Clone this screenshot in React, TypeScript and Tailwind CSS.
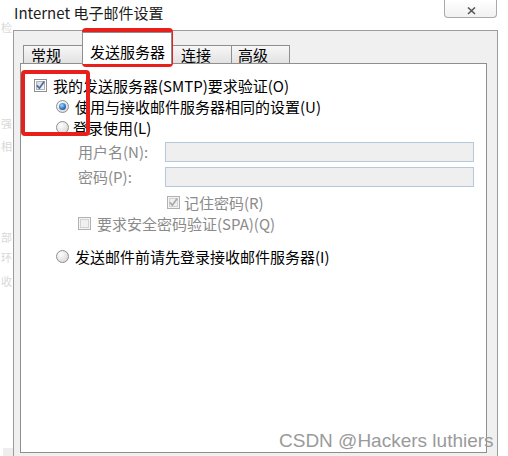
import type { ReactNode } from "react"

const REMNANTS = [
  { ch: "检", gap: "mt-[22px]" },
  { ch: "强", gap: "mt-[85px]" },
  { ch: "相", gap: "mt-[12px]" },
  { ch: "部", gap: "mt-[80px]" },
  { ch: "环", gap: "mt-[9px]" },
  { ch: "收", gap: "mt-[13px]" },
]

function CheckBox({ checked, disabled }: { checked?: boolean; disabled?: boolean }) {
  return (
    <span
      className={
        disabled
          ? "flex h-[13px] w-[13px] shrink-0 items-center justify-center border border-[#b1b1b1] bg-[#f4f4f4]"
          : "flex h-[13px] w-[13px] shrink-0 items-center justify-center border border-[#8e8f8f] bg-white"
      }
    >
      <span
        className={
          disabled
            ? "flex h-[9px] w-[9px] items-center justify-center border border-[#d2d2d2] bg-[#f0f0f0]"
            : "flex h-[9px] w-[9px] items-center justify-center border border-[#aeb3b9] bg-gradient-to-br from-[#d3d6da] to-[#f8f8f8]"
        }
      >
        {checked && (
          <svg width="9" height="9" viewBox="0 0 9 9" className="overflow-visible">
            <path
              d="M0.8 4.4 L3.4 7.2 L8.2 0.6"
              fill="none"
              stroke={disabled ? "#a9a9a9" : "#4d6aa3"}
              strokeWidth="1.7"
            />
          </svg>
        )}
      </span>
    </span>
  )
}

function Radio({ selected }: { selected?: boolean }) {
  return (
    <span className="flex h-[13px] w-[13px] shrink-0 items-center justify-center rounded-full border border-[#8e8f8f] bg-[radial-gradient(circle_at_35%_30%,#ffffff,#d0d0d0)]">
      {selected && (
        <span className="h-[7px] w-[7px] rounded-full bg-[radial-gradient(circle_at_40%_35%,#a8dcff,#2c74bf_55%,#17457c)]" />
      )}
    </span>
  )
}

function Row({ children, className }: { children: ReactNode; className: string }) {
  return (
    <div className={"flex h-[21px] items-center whitespace-nowrap text-[15px] leading-[21px] " + className}>
      {children}
    </div>
  )
}

function Field({ label, className }: { label: string; className: string }) {
  return (
    <div className={"flex h-[20px] items-center whitespace-nowrap pl-[57px] text-[15px] " + className}>
      <span className="w-[87px] text-[#8b8b8b]">{label}</span>
      <span className="h-[20px] w-[309px] border border-[#b4c9de] bg-[#efefef]" />
    </div>
  )
}

export default function App() {
  return (
    <div className="relative flex h-[456px] w-[508px] overflow-hidden bg-white font-['Noto_Sans_CJK_SC','Noto_Sans',sans-serif] text-black">
      {/* faint dialog behind, left edge */}
      <div className="flex w-[13px] shrink-0 flex-col overflow-hidden text-[11px] leading-[11px] text-[#d8d8d8]">
        {REMNANTS.map((r) => (
          <span key={r.ch} className={"ml-px " + r.gap}>
            {r.ch}
          </span>
        ))}
        <span className="mt-auto ml-[3px] h-[8px] w-[10px] bg-[#eeeeee]" />
      </div>

      <div className="flex w-[495px] flex-col">
        <div className="flex h-[30px] justify-between">
          <span className="pl-px pt-[3px] text-[15px] leading-[20px] text-[#1c1c1c]">Internet 电子邮件设置</span>
          <span className="mr-[11px] flex h-[18px] w-[53px] items-start justify-center rounded-b-[4px] border border-t-0 border-[#a9a9a9] bg-gradient-to-b from-white to-[#f1f1f1]">
            <svg width="12" height="8" viewBox="0 0 12 8" className="mt-[7px] ml-[3px]">
              <path d="M2 0.5 L9 7 M9 0.5 L2 7" stroke="#5a5a5a" strokeWidth="1.6" />
            </svg>
          </span>
        </div>

        <div className="flex w-[485px] flex-1 flex-col border-x border-t border-[#9c9c9c] bg-[#f0f0f0]">
          <div className="ml-[9px] flex h-[32px] items-end text-[15px]">
            <span className="flex h-[18px] w-[60px] items-center border-x border-t border-[#8e8f8f] bg-gradient-to-b from-[#f7f7f7] to-[#e2e2e2] pl-[7px] leading-[17px]">
              常规
            </span>
            <span className="relative z-10 -mb-px -ml-px flex h-[32px] w-[90px] items-end border-x border-t border-[#8e8f8f] bg-white pb-[2px] pl-[7px] leading-[20px]">
              发送服务器
            </span>
            <span className="-ml-px flex h-[18px] w-[61px] items-center border-x border-t border-[#8e8f8f] bg-gradient-to-b from-[#f7f7f7] to-[#e2e2e2] pl-[9px] leading-[17px]">
              连接
            </span>
            <span className="-ml-px flex h-[18px] w-[59px] items-center border-x border-t border-[#8e8f8f] bg-gradient-to-b from-[#f7f7f7] to-[#e2e2e2] pl-[6px] leading-[17px]">
              高级
            </span>
          </div>

          <div className="ml-[6px] flex h-[390px] w-[467px] flex-col border border-[#8e8f8f] bg-white pt-[11px]">
            <Row className="pl-[13px]">
              <CheckBox checked />
              <span className="ml-[6px]">我的发送服务器(SMTP)要求验证(O)</span>
            </Row>
            <Row className="pl-[35px]">
              <Radio selected />
              <span className="ml-[6px]">使用与接收邮件服务器相同的设置(U)</span>
            </Row>
            <Row className="pl-[35px]">
              <Radio />
              <span className="ml-[4px]">登录使用(L)</span>
            </Row>
            <Field label="用户名(N):" className="mt-[4px]" />
            <Field label="密码(P):" className="mt-[5px]" />
            <Row className="mt-[5px] pl-[146px] text-[#8b8b8b]">
              <CheckBox checked disabled />
              <span className="ml-[4px]">记住密码(R)</span>
            </Row>
            <Row className="pl-[57px] text-[#8b8b8b]">
              <CheckBox disabled />
              <span className="ml-[6px]">要求安全密码验证(SPA)(Q)</span>
            </Row>
            <Row className="mt-[12px] pl-[35px]">
              <Radio />
              <span className="ml-[6px]">发送邮件前请先登录接收邮件服务器(I)</span>
            </Row>
          </div>
        </div>
      </div>

      {/* annotation boxes drawn over the screenshot */}
      <span className="pointer-events-none absolute left-[82px] top-[28px] h-[39px] w-[91px] rounded-[4px] border-4 border-[#e8201c]" />
      <span className="pointer-events-none absolute left-[21px] top-[70px] h-[66px] w-[69px] rounded-[4px] border-4 border-[#e8201c]" />

      <span className="absolute left-[279px] top-[431px] font-['Liberation_Sans',Arial,sans-serif] text-[19px] leading-none text-[#9a9a9a]">
        CSDN @Hackers luthiers
      </span>
    </div>
  )
}
